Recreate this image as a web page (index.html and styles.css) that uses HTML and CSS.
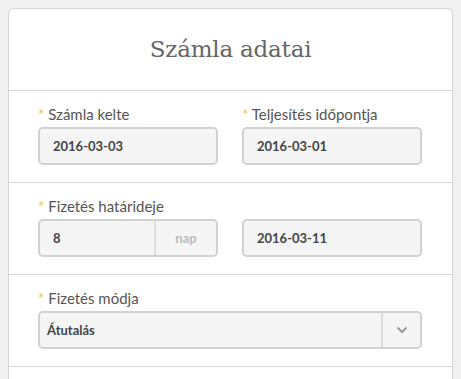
FILE: index.html
```html
<!DOCTYPE html>
<html lang="hu">
<head>
  <meta charset="UTF-8">
  <title>Számla adatai</title>
  <link rel="stylesheet" href="styles.css">
</head>
<body>
  <div class="card">
    <div class="card-title">Számla adatai</div>

    <div class="row">
      <div class="field">
        <label class="label"><span class="req">*</span> Számla kelte</label>
        <div class="input">2016-03-03</div>
      </div>
      <div class="field">
        <label class="label"><span class="req">*</span> Teljesítés időpontja</label>
        <div class="input">2016-03-01</div>
      </div>
    </div>

    <div class="row">
      <div class="field">
        <label class="label"><span class="req">*</span> Fizetés határideje</label>
        <div class="input-group">
          <div class="input-part">8</div>
          <div class="addon">nap</div>
        </div>
      </div>
      <div class="field">
        <label class="label">&nbsp;</label>
        <div class="input">2016-03-11</div>
      </div>
    </div>

    <div class="row">
      <div class="field wide">
        <label class="label"><span class="req">*</span> Fizetés módja</label>
        <div class="select">
          <div class="select-value">Átutalás</div>
          <div class="select-arrow">
            <svg width="12" height="8" viewBox="0 0 12 8"><path d="M1.5 1.5 L6 6 L10.5 1.5" fill="none" stroke="#999" stroke-width="2"/></svg>
          </div>
        </div>
      </div>
    </div>

    <div class="row empty"></div>
  </div>
</body>
</html>
```

FILE: styles.css
```css
* {margin: 0; padding: 0; box-sizing: border-box;}
html, body {overflow: hidden;}
body {background-color: #f0f0f0; font-family: 'Lato', sans-serif; padding: 8px 8px 0 8px; height: 379px;}
.card {background-color: #fff; border: 1px solid #d4d4d4; border-radius: 6px; width: 445px;}
.card-title {font-family: 'DejaVu Serif', serif; font-size: 23px; color: #666; text-align: center; height: 82px; line-height: 80px; border-bottom: 1px solid #d4d4d4; letter-spacing: -0.2px;}

.row {display: flex; gap: 24px; padding: 14px 29px 17px 29px; border-bottom: 1px solid #d4d4d4;}
.row.empty {height: 12px; border-bottom: none;}
.field {width: 180px;}
.field.wide {width: 384px;}
.label {display: block; font-size: 15px; line-height: 18px; color: #555; margin-bottom: 4px;}
.req {color: #e8c060;}

.input {height: 38px; border: 2px solid #d2d2d2; border-radius: 5px; background-color: #f5f5f5; padding: 0 13px; font-size: 13px; font-weight: bold; color: #444; line-height: 34px;}

.input-group {display: flex; height: 38px; border: 2px solid #d2d2d2; border-radius: 5px; background-color: #f5f5f5;}
.input-part {flex: 1; padding: 0 13px; font-size: 13px; font-weight: bold; color: #444; line-height: 34px;}
.addon {width: 62px; border-left: 2px solid #ddd; text-align: center; font-size: 13px; font-weight: bold; color: #bbb; line-height: 34px;}

.select {display: flex; height: 38px; border: 2px solid #d2d2d2; border-radius: 5px; background-color: #f5f5f5;}
.select-value {flex: 1; padding: 0 7px; font-size: 13px; font-weight: bold; color: #444; line-height: 34px;}
.select-arrow {width: 39px; border-left: 2px solid #ddd; display: flex; align-items: center; justify-content: center;}
```
